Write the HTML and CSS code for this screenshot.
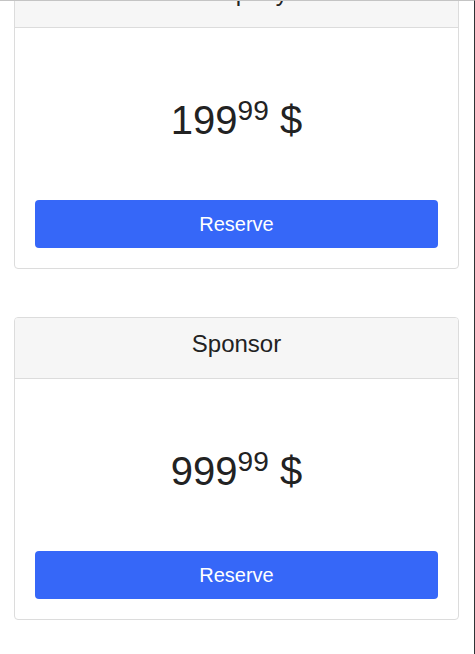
FILE: index.html
```html
<!DOCTYPE html>
<html lang="en">
<head>
<meta charset="utf-8">
<title>Pricing</title>
<link rel="stylesheet" href="styles.css">
</head>
<body>
<div class="frame">
  <div class="list">
    <div class="card">
      <div class="card-header">Company</div>
      <div class="card-body">
        <div class="price">199<sup>99</sup> $</div>
        <button class="btn">Reserve</button>
      </div>
    </div>
    <div class="card">
      <div class="card-header">Sponsor</div>
      <div class="card-body">
        <div class="price">999<sup>99</sup> $</div>
        <button class="btn">Reserve</button>
      </div>
    </div>
  </div>
</div>
</body>
</html>
```

FILE: styles.css
```css
html, body {
  margin: 0;
  padding: 0;
  background: #fff;
}
body {
  font-family: "Liberation Sans", Arial, sans-serif;
  color: #212121;
}
.frame {
  height: 100vh;
  box-sizing: border-box;
  border-top: 1px solid #c4c4c4;
  border-right: 1px solid #2f3336;
  overflow: hidden;
}
.list {
  margin-top: -35px;
  padding: 0 15px 0 14px;
  display: flex;
  flex-direction: column;
  gap: 48px;
}
.card {
  border: 1px solid #dcdcdc;
  border-radius: 4px;
  background: #fff;
  overflow: hidden;
}
.card-header {
  background: #f6f6f6;
  border-bottom: 1px solid #dcdcdc;
  height: 60px;
  box-sizing: border-box;
  height: 61px;
  padding-bottom: 8px;
  line-height: 52px;
  text-align: center;
  font-size: 24px;
  color: #222;
}
.card-body {
  padding: 20px;
  display: flex;
  flex-direction: column;
}
.price {
  margin: 48px 0 56px;
  font-size: 40px;
  line-height: 48px;
  text-align: center;
  color: #222;
}
.price sup {
  font-size: 28px;
  line-height: 0;
  vertical-align: baseline;
  position: relative;
  top: -14px;
}
.btn {
  height: 48px;
  border: none;
  border-radius: 4px;
  background: #3667f8;
  color: #fff;
  font-family: "Liberation Sans", Arial, sans-serif;
  font-size: 20px;
  cursor: pointer;
}
```
